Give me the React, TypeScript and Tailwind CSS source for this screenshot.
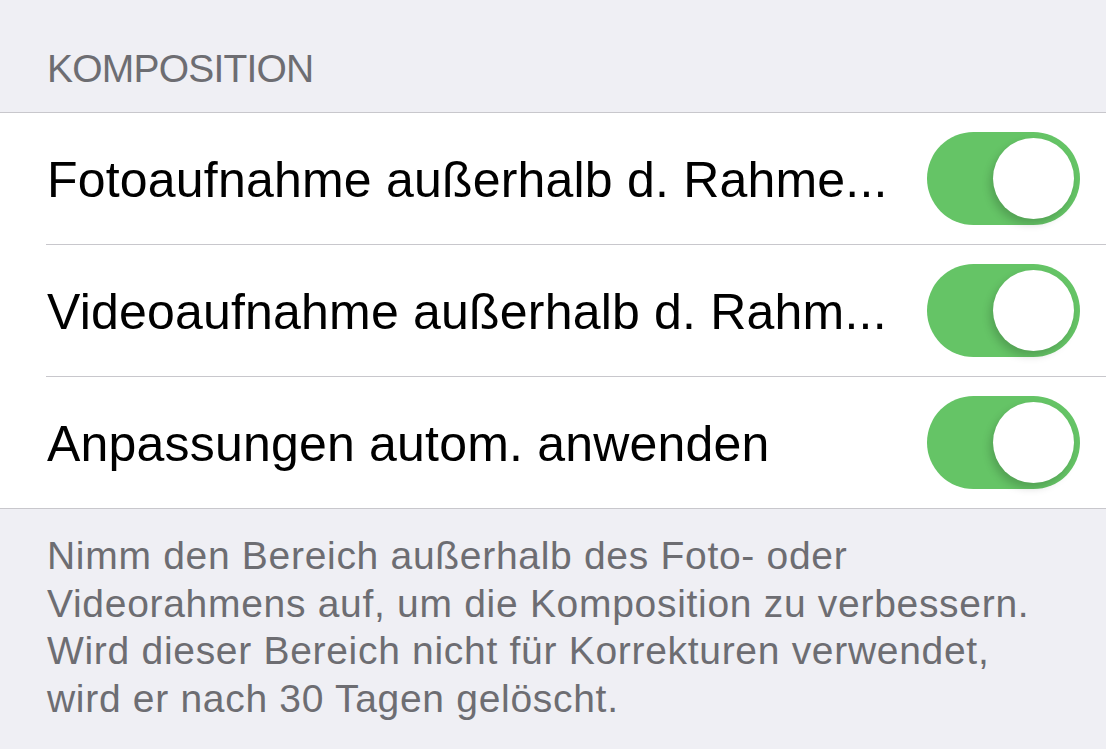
const rows = [
  'Fotoaufnahme außerhalb d. Rahme...',
  'Videoaufnahme außerhalb d. Rahm...',
  'Anpassungen autom. anwenden',
];

function Toggle() {
  return (
    <div className="relative w-[153px] h-[93px] rounded-full bg-[#65c466] flex-shrink-0">
      <div className="absolute right-[6px] top-[6px] w-[81px] h-[81px] rounded-full bg-white shadow-[-3px_5px_8px_rgba(0,0,0,0.18)]" />
    </div>
  );
}

export default function App() {
  return (
    <div className="w-[1106px] h-[749px] bg-[#efeff4] overflow-hidden font-['Liberation_Sans',Arial,sans-serif]">
      <div className="h-[112px] pt-[49px] pl-[47px] text-[39px] leading-[39px] tracking-[-0.8px] text-[#6d6d72]">KOMPOSITION</div>
      <div className="bg-white border-y border-[#c8c7cc]">
        {rows.map((label, i) => (
          <div key={label} className={`ml-[46px] flex items-center pr-[26px] ${i < rows.length - 1 ? 'h-[132px] border-b border-[#c8c7cc]' : 'h-[131px]'}`}>
            <span className="flex-1 pl-px pt-[3px] text-[50px] leading-[50px] tracking-[0.2px] text-black whitespace-nowrap">{label}</span>
            <Toggle />
          </div>
        ))}
      </div>
      <p className="pt-[23px] pl-[47px] text-[39px] leading-[47.7px] tracking-[0.7px] text-[#6d6d72]">
        Nimm den Bereich außerhalb des Foto- oder<br />
        Videorahmens auf, um die Komposition zu verbessern.<br />
        Wird dieser Bereich nicht für Korrekturen verwendet,<br />
        wird er nach 30 Tagen gelöscht.
      </p>
    </div>
  );
}
